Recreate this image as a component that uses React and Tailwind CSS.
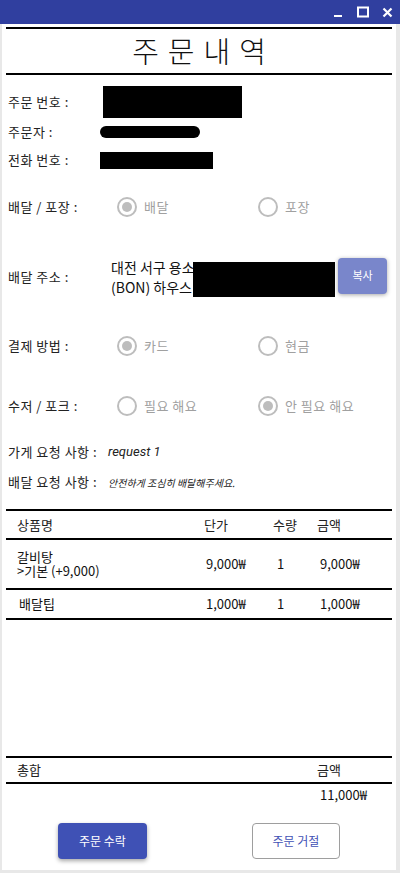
import React from "react";

const KR = { fontFamily: '"Noto Sans CJK KR", "Noto Sans", sans-serif' };

function Radio({ checked, label }) {
  return (
    <div className="flex items-center">
      <div className="w-[20px] h-[20px] rounded-full border-2 border-[#bdbdbd] flex items-center justify-center">
        {checked && <div className="w-[10px] h-[10px] rounded-full bg-[#bdbdbd]" />}
      </div>
      <span className="ml-[7px] text-[13px] text-[#a0a0a0] tracking-[0.5px]">{label}</span>
    </div>
  );
}

function RadioRow({ label, a, b, checkA, h, mt }) {
  return (
    <div className={`flex items-center ${h} ${mt}`}>
      <div className="w-[111px] pl-[2px] text-[13px] text-[#222] tracking-[0.5px]">{label}</div>
      <div className="w-[141px]">
        <Radio checked={checkA} label={a} />
      </div>
      <Radio checked={!checkA} label={b} />
    </div>
  );
}

function Line() {
  return <div className="h-[2px] bg-black" />;
}

export default function App() {
  return (
    <div className="w-[400px] h-[873px] bg-[#e8e8e8] flex flex-col" style={KR}>
      <div className="h-[24px] bg-[#303f9f] flex items-center justify-end shrink-0">
        <svg width="10" height="10" viewBox="0 0 10 10" className="mr-[14px] mt-[2px]">
          <rect x="1" y="7" width="8" height="2" fill="#fff" />
        </svg>
        <svg width="12" height="12" viewBox="0 0 12 12" className="mr-[13px]">
          <rect x="1" y="1.5" width="10" height="9" fill="none" stroke="#fff" strokeWidth="2" />
        </svg>
        <svg width="11" height="11" viewBox="0 0 11 11" className="mr-[7px]">
          <path d="M1.5 1.5 L9.5 9.5 M9.5 1.5 L1.5 9.5" stroke="#fff" strokeWidth="2.2" />
        </svg>
      </div>
      <div className="mx-[2px] mr-[4px] h-[846px] bg-white px-[4px] pt-[3px] flex flex-col text-[#222]">
        <Line />
        <div className="h-[44px] flex items-center justify-center">
          <span className="text-[29px] font-light tracking-[9px] pl-[9px] text-[#111]">주문내역</span>
        </div>
        <Line />

        <div className="flex items-center h-[28px] mt-[13px]">
          <div className="w-[97px] pl-[2px] text-[13px] tracking-[0.5px]">주문 번호 :</div>
          <div className="w-[139px] h-[32px] bg-black" />
        </div>
        <div className="flex items-center h-[32px]">
          <div className="w-[94px] pl-[2px] text-[13px] tracking-[0.5px]">주문자 :</div>
          <div className="w-[100px] h-[12px] rounded-full bg-black" />
        </div>
        <div className="flex items-center h-[24px]">
          <div className="w-[94px] pl-[2px] text-[13px] tracking-[0.5px]">전화 번호 :</div>
          <div className="w-[113px] h-[17px] bg-black" />
        </div>

        <RadioRow label="배달 / 포장 :" a="배달" b="포장" checkA h="h-[34px]" mt="mt-[18px]" />

        <div className="flex items-center h-[40px] mt-[33px]">
          <div className="w-[105px] pl-[2px] text-[13px] tracking-[0.5px]">배달 주소 :</div>
          <div className="relative w-[227px] h-[40px] flex flex-col justify-center leading-[20px] text-[14px] text-[#111]">
            <div>대전 서구 용소...</div>
            <div>(BON) 하우스</div>
            <div className="absolute left-[82px] top-[5px] w-[142px] h-[35px] bg-black" />
          </div>
          <div className="mb-[3px] w-[49px] h-[36px] rounded-[4px] bg-[#7986cb] shadow-[0_1px_4px_rgba(0,0,0,0.35)] flex items-center justify-center text-white text-[11px]">
            복사
          </div>
        </div>

        <RadioRow label="결제 방법 :" a="카드" b="현금" checkA h="h-[34px]" mt="mt-[32px]" />
        <RadioRow label="수저 / 포크 :" a="필요 해요" b="안 필요 해요" checkA={false} h="h-[34px]" mt="mt-[26px]" />

        <div className="flex items-center h-[24px] mt-[17px]">
          <div className="w-[102px] pl-[2px] text-[13px] tracking-[0.5px]">가게 요청 사항 :</div>
          <div className="text-[13px] italic text-[#222]" style={{ fontFamily: 'Roboto, "Noto Sans CJK KR", sans-serif' }}>request 1</div>
        </div>
        <div className="flex items-center h-[24px] mt-[6px]">
          <div className="w-[102px] pl-[2px] text-[13px] tracking-[0.5px]">배달 요청 사항 :</div>
          <div className="text-[10px] italic text-[#222]">안전하게 조심히 배달해주세요.</div>
        </div>

        <div className="mt-[15px]">
          <Line />
          <div className="grid grid-cols-[198px_69px_44px_1fr] h-[27px] items-center text-[13px] text-[#222]">
            <div className="pl-[11px]">상품명</div>
            <div>단가</div>
            <div>수량</div>
            <div>금액</div>
          </div>
          <Line />
          <div className="grid grid-cols-[198px_69px_44px_1fr] h-[48px] items-center text-[13px] text-[#111]">
            <div className="pl-[11px] text-[13px]">
              <div className="h-[14px] leading-[14px]">갈비탕</div>
              <div className="h-[14px] leading-[14px]">&gt;기본 (+9,000)</div>
            </div>
            <div className="pl-[2px]">9,000₩</div>
            <div className="pl-[4px]">1</div>
            <div className="pl-[3px]">9,000₩</div>
          </div>
          <Line />
          <div className="grid grid-cols-[198px_69px_44px_1fr] h-[28px] items-center text-[13px] text-[#111]">
            <div className="pl-[13px]">배달팁</div>
            <div className="pl-[2px]">1,000₩</div>
            <div className="pl-[4px]">1</div>
            <div className="pl-[3px]">1,000₩</div>
          </div>
          <Line />
        </div>

        <div className="mt-[136px]">
          <Line />
          <div className="grid grid-cols-[311px_1fr] h-[24px] items-center text-[13px] text-[#222]">
            <div className="pl-[11px]">총합</div>
            <div>금액</div>
          </div>
          <Line />
          <div className="grid grid-cols-[314px_1fr] h-[22px] items-center text-[13px] text-[#111]">
            <div />
            <div>11,000₩</div>
          </div>
        </div>

        <div className="flex mt-[17px]">
          <div className="ml-[52px] w-[89px] h-[36px] rounded-[4px] bg-[#3f51b5] shadow-[0_2px_4px_rgba(0,0,0,0.35)] flex items-center justify-center text-white text-[12px]">
            주문 수락
          </div>
          <div className="ml-[105px] w-[88px] h-[36px] rounded-[4px] border border-[#9e9e9e] flex items-center justify-center text-[#3f51b5] text-[12px]">
            주문 거절
          </div>
        </div>
      </div>
    </div>
  );
}
